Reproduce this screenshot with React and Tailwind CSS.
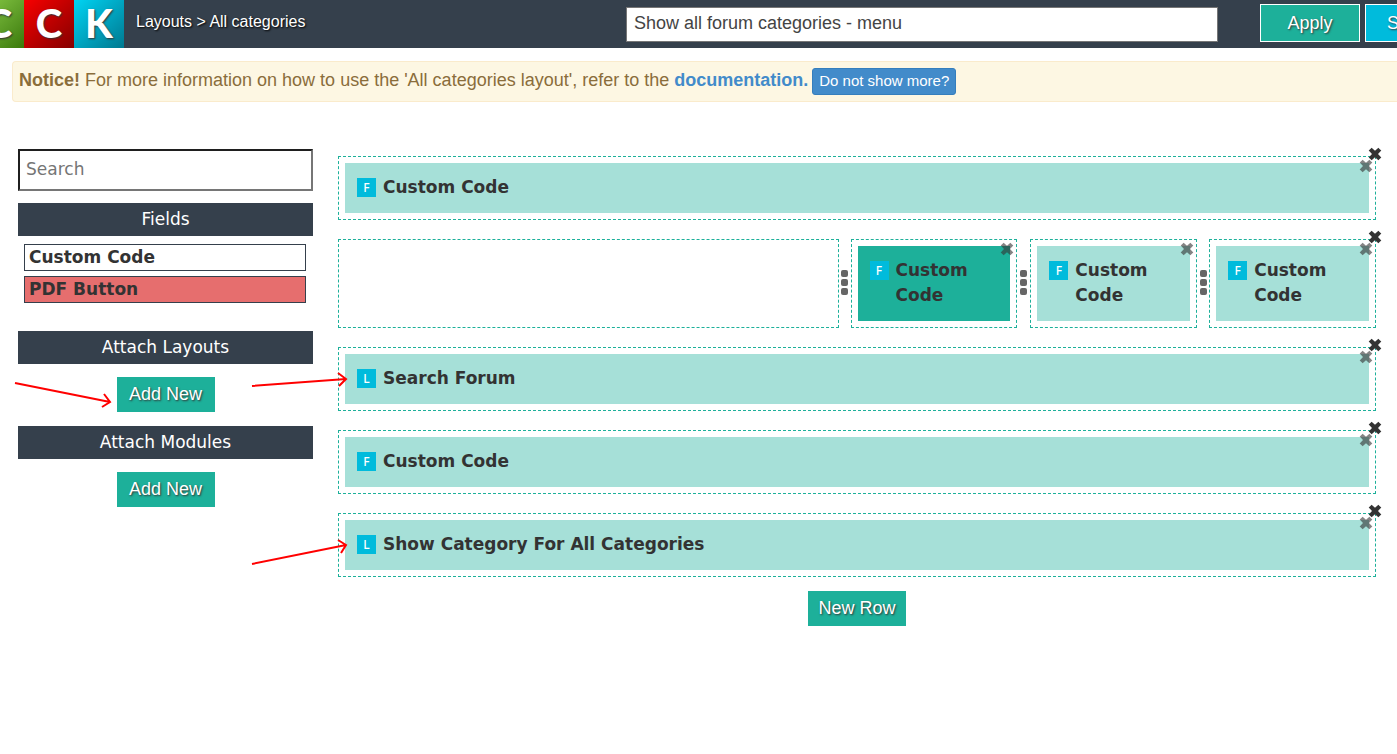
import { useState } from 'react';

const FIELDS = [
    { name: 'Custom Code', color: 'bg-white' },
    { name: 'PDF Button', color: 'bg-[#e66e6e]' },
];

function CloseButton({ label, className }) {
    return (
        <button type="button" aria-label={label} className={`absolute size-3 cursor-pointer ${className}`}>
            <svg viewBox="0 0 12 12" className="size-3 overflow-visible" fill="#333">
                <path d="M2.6 -0.3 L6 2.8 L9.4 -0.3 L10.8 1.2 L12.3 2.4 L9 6 L12.3 9.6 L10.9 10.8 L9.4 12.3 L6 9.2 L2.6 12.3 L1.1 10.8 L-0.3 9.6 L3 6 L-0.3 2.4 L1.1 1.2 Z" />
            </svg>
        </button>
    );
}

function Item({ type = 'F', name, active }) {
    return (
        <div className={`relative flex items-start gap-[7px] px-3 pt-3 pb-[13px] ${active ? 'bg-[#1db09a]' : 'bg-[#a6e0d8]'}`}>
            <span className="mt-[3px] flex size-[19px] shrink-0 items-center justify-center bg-[#00bbdc] font-['Noto_Sans',sans-serif] text-[12px] font-medium text-white">
                {type}
            </span>
            <span className="text-[17px] leading-[25px] font-bold text-[#333]">{name}</span>
            <CloseButton label={`Remove ${name}`} className="-top-[3px] -right-[3px] opacity-60" />
        </div>
    );
}

function Column({ children }) {
    return <div className="min-w-0 border border-dashed border-[#1db09a] p-[6px]">{children}</div>;
}

function Row({ children, className = '' }) {
    return (
        <div className={`relative grid ${className}`}>
            {children}
            <CloseButton label="Remove row" className="-top-2 -right-[5px]" />
        </div>
    );
}

// Handle for resizing two neighbouring columns
function Handle() {
    return (
        <div className="flex cursor-col-resize flex-col items-center justify-center gap-[2px] pb-[3px]">
            <span className="size-[7px] rounded-[2px] bg-[#666]" />
            <span className="size-[7px] rounded-[2px] bg-[#666]" />
            <span className="size-[7px] rounded-[2px] bg-[#666]" />
        </div>
    );
}

function SideTitle({ children }) {
    return (
        <h2 className="bg-[#35404c] py-1 text-center text-[17px] leading-[25px] text-white">{children}</h2>
    );
}

function ActionButton({ children }) {
    return (
        <button
            type="button"
            className="h-[35px] w-[98px] cursor-pointer bg-[#1db09a] font-['Liberation_Sans',Arial,sans-serif] text-[18px] text-white [text-shadow:1px_1px_2px_#333]"
        >
            {children}
        </button>
    );
}

function Logo() {
    const tile = "flex h-12 w-[50px] shrink-0 items-center justify-center pb-[2px] font-['Lato',sans-serif] text-[40px] leading-none font-black text-white [text-shadow:1px_1px_2px_#333]";
    return (
        <div className="flex shrink-0">
            <div className="flex w-6 justify-end overflow-hidden">
                <span className={`${tile} bg-linear-to-br from-[#8ed04a] to-[#3b7a08]`}>C</span>
            </div>
            <span className={`${tile} bg-linear-to-br from-[#f80000] to-[#860000]`}>C</span>
            <span className={`${tile} bg-linear-to-br from-[#00d4f4] to-[#007990]`}>K</span>
        </div>
    );
}

function Arrows() {
    return (
        <svg className="pointer-events-none absolute top-0 left-0" width="360" height="600" fill="none" stroke="#f00" strokeWidth="2" aria-hidden="true">
            <path d="M15 383 L110 402 M104 394 L110 402 L102 407" />
            <path d="M252 386 L346 379 M338 373 L346 379 L339 386" />
            <path d="M252 564 L346 545 M338 540 L346 545 L341 553" />
        </svg>
    );
}

export default function App() {
    const [title, setTitle] = useState('Show all forum categories - menu');
    const [search, setSearch] = useState('');
    const [notice, setNotice] = useState(true);

    const fields = FIELDS.filter((f) => f.name.toLowerCase().includes(search.toLowerCase()));

    return (
        <div className="relative min-h-screen overflow-hidden bg-white font-['Liberation_Sans',Arial,sans-serif] text-[#333]">
            <header className="flex h-12 items-center bg-[#35404c]">
                <div className="flex w-[626px] shrink-0">
                    <Logo />
                    <h1 className="pt-[10px] pl-3 text-[16px] leading-6 text-white [text-shadow:1px_1px_2px_#000]">
                        Layouts &gt; All categories
                    </h1>
                </div>
                <input
                    aria-label="Layout title"
                    value={title}
                    onChange={(e) => setTitle(e.target.value)}
                    className="h-[35px] min-w-0 flex-1 border border-[#767676] bg-white px-[7px] pb-[2px] text-[18px] text-[#444] outline-none"
                />
                <div className="-mt-[2px] flex shrink-0 gap-[5px] pl-[42px]">
                    <button type="button" className="h-[38px] w-[100px] border border-white bg-[#1db09a] text-[18px] text-white [text-shadow:1px_1px_2px_#333]">
                        Apply
                    </button>
                    <div className="w-8 overflow-hidden">
                        <button type="button" className="h-[38px] border border-white bg-[#00bbdc] px-[21px] text-[18px] text-white [text-shadow:1px_1px_2px_#333]">
                            Save
                        </button>
                    </div>
                </div>
            </header>

            {notice && (
                <div className="mt-[13px] ml-3 flex h-[41px] items-center rounded-l-[4px] border-y border-l border-[#faebcc] bg-[#fdf7e3] pl-[6px] text-[18px] text-[#8a6d3b]">
                    <p className="-mt-[3px] whitespace-pre">
                        <strong>Notice!</strong> For more information on how to use the 'All categories layout', refer to the{' '}
                        <a href="#documentation" className="font-bold text-[#428bca]">documentation.</a>
                    </p>
                    <button
                        type="button"
                        onClick={() => setNotice(false)}
                        className="ml-1 h-[27px] shrink-0 cursor-pointer rounded-[3px] border border-[#357ebd] bg-[#428bca] px-[6px] text-[15px] text-white"
                    >
                        Do not show more?
                    </button>
                </div>
            )}

            <main className="mt-[47px] flex gap-[25px] pr-[21px] pl-[18px] font-['DejaVu_Sans',Verdana,sans-serif]">
                <aside className="w-[295px] shrink-0">
                    <input
                        type="search"
                        aria-label="Search fields"
                        placeholder="Search"
                        value={search}
                        onChange={(e) => setSearch(e.target.value)}
                        className="mb-3 h-[42px] w-full border-2 border-t-[#1f1f1f] border-r-[#767676] border-b-[#767676] border-l-[#1f1f1f] px-[6px] pb-[2px] text-[17px] outline-none placeholder:text-[#757575]"
                    />
                    <SideTitle>Fields</SideTitle>
                    <ul className="mt-2 mr-[7px] mb-7 ml-[6px] flex flex-col gap-[5px]">
                        {fields.map((f) => (
                            <li key={f.name} className={`h-[27px] border border-[#35404c] px-1 text-[17px] leading-[25px] font-bold ${f.color}`}>
                                {f.name}
                            </li>
                        ))}
                    </ul>

                    <SideTitle>Attach Layouts</SideTitle>
                    <div className="mt-[13px] mb-[14px] flex justify-center">
                        <ActionButton>Add New</ActionButton>
                    </div>

                    <SideTitle>Attach Modules</SideTitle>
                    <div className="mt-[13px] mb-[14px] flex justify-center">
                        <ActionButton>Add New</ActionButton>
                    </div>
                </aside>

                <section className="flex min-w-0 flex-1 flex-col gap-[19px] pt-[7px]">
                    <Row>
                        <Column><Item name="Custom Code" /></Column>
                    </Row>
                    <Row className="grid-cols-[3fr_12px_1fr_13px_1fr_12px_1fr]">
                        <Column />
                        <Handle />
                        <Column><Item name="Custom Code" active /></Column>
                        <Handle />
                        <Column><Item name="Custom Code" /></Column>
                        <Handle />
                        <Column><Item name="Custom Code" /></Column>
                    </Row>
                    <Row>
                        <Column><Item type="L" name="Search Forum" /></Column>
                    </Row>
                    <Row>
                        <Column><Item name="Custom Code" /></Column>
                    </Row>
                    <Row>
                        <Column><Item type="L" name="Show Category For All Categories" /></Column>
                    </Row>
                    <div className="-mt-[5px] flex justify-center">
                        <ActionButton>New Row</ActionButton>
                    </div>
                </section>
            </main>

            <Arrows />
        </div>
    );
}
